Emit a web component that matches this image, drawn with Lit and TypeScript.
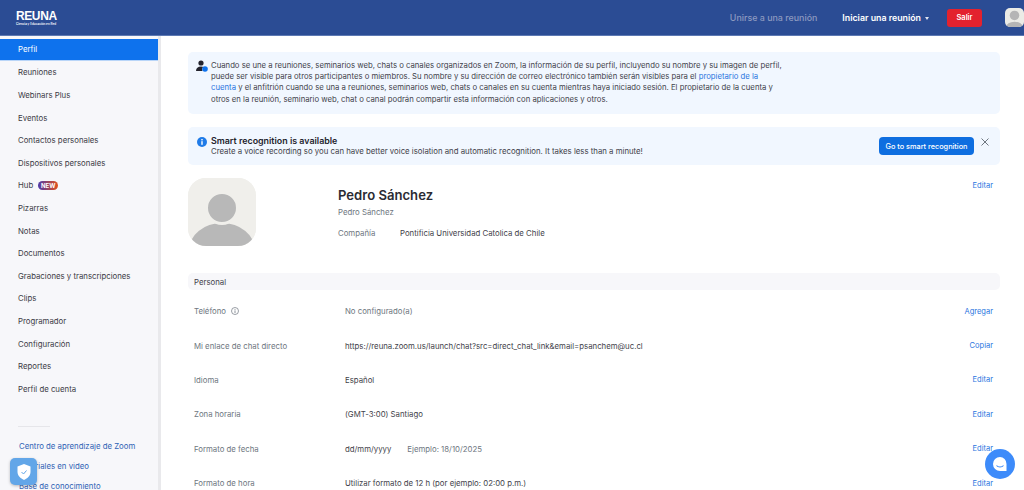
import { LitElement, html, css } from "lit";
import { customElement } from "lit/decorators.js";

const NAV = ["Reuniones","Webinars Plus","Eventos","Contactos personales","Dispositivos personales","Hub","Pizarras","Notas","Documentos","Grabaciones y transcripciones","Clips","Programador","Configuración","Reportes","Perfil de cuenta"];
const ROWS: [string, string, string][] = [
  ["Teléfono", "No configurado(a)", "Agregar"],
  ["Mi enlace de chat directo", "https://reuna.zoom.us/launch/chat?src=direct_chat_link&email=psanchem@uc.cl", "Copiar"],
  ["Idioma", "Español", "Editar"],
  ["Zona horaria", "(GMT-3:00) Santiago", "Editar"],
  ["Formato de fecha", "dd/mm/yyyy", "Editar"],
  ["Formato de hora", "Utilizar formato de 12 h (por ejemplo: 02:00 p.m.)", "Editar"],
];

@customElement("app-root")
export class AppRoot extends LitElement {
  static styles = css`
    :host { display: block; width: 1024px; height: 490px; overflow: hidden; position: relative; background: #fff; font-family: Inter, "Liberation Sans", sans-serif; font-size: 7.8px; color: #3f3f4a; }
    * { box-sizing: border-box; }
    a { color: #2a75e0; text-decoration: none; }
    .top { height: 36px; background: #2b4c94; border-bottom: 1px solid #5d79b3; display: flex; align-items: center; padding-left: 16px; }
    .logo { display: flex; flex-direction: column; color: #fff; width: 41px; margin-top: 1px; }
    .logo b { font: 700 12px/11px "Liberation Sans", sans-serif; letter-spacing: -0.4px; }
    .logo span { font-size: 3px; line-height: 4px; white-space: nowrap; font-weight: 600; }
    .spacer { flex: 1; }
    .join { color: #8d9ac0; font-size: 8.9px; font-weight: 500; margin-right: 25px; }
    .start { color: #fff; font-size: 8.8px; font-weight: 600; display: flex; align-items: center; gap: 4px; margin-right: 18px; }
    .caret { width: 0; height: 0; border: 2.5px solid transparent; border-top: 3px solid #dfe5f2; margin-top: 3px; }
    .exit { width: 35px; height: 18px; background: #e3222e; border-radius: 3px; color: #fff; font-size: 7.5px; font-weight: 600; display: flex; align-items: center; justify-content: center; margin-right: 23px; }
    .avatar-s { width: 19px; height: 19px; border-radius: 5px; background: #ebebe6; overflow: hidden; display: block; flex: none; }
    .wrap { display: flex; height: 454px; }
    .side { width: 161px; flex: none; height: 100%; background: #f7f7fa; border-right: 3px solid #e9e9ec; padding-top: 2.5px; display: flex; flex-direction: column; overflow: hidden; }
    .item { height: 22.6px; flex: none; display: flex; align-items: center; padding-left: 18px; gap: 5px; color: #3c3c46; }
    .item.on { background: #0e72ed; color: #fff; border-bottom: 1px solid #b9d5f8; }
    .badge { width: 20px; height: 9px; border-radius: 5px; background: linear-gradient(90deg,#4d3bab,#e2501b); color: #fff; font-size: 6px; font-weight: 700; display: flex; align-items: center; justify-content: center; }
    .rule { width: 32px; height: 1px; background: #e6e6ea; margin: 26px 0 0 18px; flex: none; }
    .help { height: 20px; flex: none; display: flex; align-items: center; padding-left: 19px; color: #2f62b5; white-space: nowrap; }
    .help.first { margin-top: 8.5px; }
    .main { flex: 1; padding: 16px 24px 0 27px; min-width: 0; display: flex; flex-direction: column; }
    .main > * { flex: none; }
    .box { background: #f1f7ff; border-radius: 5px; }
    .notice { height: 62px; display: flex; gap: 3px; padding: 7.5px 8px 0 8px; line-height: 11.4px; font-size: 7.74px; }
    .notice svg { flex: none; }
    .notice p { margin: 0; width: 572px; }
    .banner { height: 38px; margin-top: 13px; display: flex; align-items: center; padding: 0 8px; gap: 3px; }
    .banner-text { flex: 1; display: flex; flex-direction: column; }
    .banner-text b { font-size: 8.9px; font-weight: 600; color: #23232d; line-height: 11px; }
    .banner-text span { line-height: 11px; }
    .go { height: 18px; width: 95px; background: #0e6ee0; border-radius: 4px; color: #fff; font-size: 7.3px; font-weight: 500; display: flex; align-items: center; justify-content: center; margin-right: 4px; white-space: nowrap; flex: none; }
    .close { width: 8px; height: 8px; display: block; margin: -9px 3px 0 0; flex: none; }
    .profile { height: 68px; margin-top: 13px; display: flex; }
    .photo { width: 68px; height: 68px; border-radius: 18px; flex: none; background: #f0efeb; overflow: hidden; display: block; }
    .info { margin-left: 82px; flex: 1; padding-top: 9px; }
    .info h1 { margin: 0; font-size: 13.1px; line-height: 16px; font-weight: 600; color: #2b2b33; }
    .sub { color: #6e7680; line-height: 11px; margin-top: 4px; }
    .co { display: flex; margin-top: 10px; line-height: 11px; }
    .co span { width: 62px; color: #6e7680; }
    .edit { color: #2a75e0; padding: 3px 7px 0 0; font-size: 7.5px; }
    .section { height: 17px; margin-top: 27px; background: #f7f7fa; border-radius: 5px; padding-left: 6px; display: flex; align-items: center; }
    .row { height: 34.4px; display: grid; grid-template-columns: 151px 1fr auto; align-items: center; padding: 0 7px 0 6px; }
    .row a { font-size: 7.5px; }
    .rows { margin-top: 4px; }
    .label { color: #6e7680; display: flex; align-items: center; gap: 5px; }
    .ex { color: #6e7680; margin-left: 16px; }
    .muted { color: #6e7680; }
    .shield { position: absolute; left: 10px; top: 458px; width: 27px; height: 27px; border-radius: 5px; background: #62a6e8; box-shadow: 0 1px 3px rgba(0,0,0,.25); display: flex; align-items: center; justify-content: center; }
    .chat { position: absolute; left: 985px; top: 449px; width: 30px; height: 30px; border-radius: 50%; background: #3d8bfa; display: flex; align-items: center; justify-content: center; }
  `;

  render() {
    return html`
      <div class="top">
        <div class="logo"><b>REUNA</b><span>Ciencia y Educación en Red</span></div>
        <div class="spacer"></div>
        <span class="join">Unirse a una reunión</span>
        <span class="start">Iniciar una reunión <i class="caret"></i></span>
        <span class="exit">Salir</span>
        <svg class="avatar-s" viewBox="0 0 18 18"><circle cx="9" cy="7" r="4.5" fill="#b5b5b5"/><ellipse cx="9" cy="18" rx="8" ry="5" fill="#b5b5b5"/></svg>
      </div>
      <div class="wrap">
        <nav class="side">
          <div class="item on">Perfil</div>
          ${NAV.map(n => html`<div class="item">${n}${n === "Hub" ? html`<span class="badge">NEW</span>` : ""}</div>`)}
          <div class="rule"></div>
          <div class="help first">Centro de aprendizaje de Zoom</div>
          <div class="help">Tutoriales en video</div>
          <div class="help">Base de conocimiento</div>
        </nav>
        <main class="main">
          <div class="box notice">
            <svg width="12" height="14" viewBox="0 0 12 14"><circle cx="5" cy="3" r="2.6" fill="#23232d"/><path d="M0 11c0-3 2-4.500 5-4.500 1 0 2 .2 2.600.5A3 3 0 0 0 6.500 11z" fill="#23232d"/><circle cx="9" cy="9" r="2.800" fill="#0e72ed"/></svg>
            <p>Cuando se une a reuniones, seminarios web, chats o canales organizados en Zoom, la información de su perfil, incluyendo su nombre y su imagen de perfil, puede ser visible para otros participantes o miembros. Su nombre y su dirección de correo electrónico también serán visibles para el <a>propietario de la cuenta</a> y el anfitrión cuando se una a reuniones, seminarios web, chats o canales en su cuenta mientras haya iniciado sesión. El propietario de la cuenta y otros en la reunión, seminario web, chat o canal podrán compartir esta información con aplicaciones y otros.</p>
          </div>
          <div class="box banner">
            <svg width="12" height="12" viewBox="0 0 12 12" style="margin-top:-9px"><circle cx="6" cy="6" r="5" fill="#1f7be8"/><rect x="5.300" y="5.200" width="1.400" height="3.600" fill="#fff"/><rect x="5.300" y="3" width="1.400" height="1.400" fill="#fff"/></svg>
            <div class="banner-text"><b>Smart recognition is available</b><span>Create a voice recording so you can have better voice isolation and automatic recognition. It takes less than a minute!</span></div>
            <span class="go">Go to smart recognition</span>
            <svg class="close" viewBox="0 0 8 8"><path d="M.5.5l7 7M7.500.5l-7 7" stroke="#6e7680" stroke-width="1" fill="none"/></svg>
          </div>
          <div class="profile">
            <svg class="photo" viewBox="0 0 68 68"><rect width="68" height="68" fill="#f0efeb"/><ellipse cx="34" cy="72" rx="33" ry="27" fill="#b8b8b8"/><circle cx="34" cy="30" r="15.500" fill="#b8b8b8" stroke="#f0efeb" stroke-width="3"/></svg>
            <div class="info">
              <h1>Pedro Sánchez</h1>
              <div class="sub">Pedro Sánchez</div>
              <div class="co"><span>Compañía</span>Pontificia Universidad Catolica de Chile</div>
            </div>
            <a class="edit">Editar</a>
          </div>
          <div class="section">Personal</div>
          <div class="rows">
            ${ROWS.map(([l, v, a], i) => html`
              <div class="row">
                <span class="label">${l}${i === 0 ? html`<svg width="8" height="8" viewBox="0 0 8 8"><circle cx="4" cy="4" r="3.500" fill="none" stroke="#6e7680" stroke-width=".7"/><path d="M4 3.400v2.600M4 2v.8" stroke="#6e7680" stroke-width=".8"/></svg>` : ""}</span>
                <span class=${i === 0 ? "muted" : ""}>${v}${i === 4 ? html`<span class="ex">Ejemplo: 18/10/2025</span>` : ""}</span>
                <a>${a}</a>
              </div>`)}
          </div>
        </main>
      </div>
      <div class="shield"><svg width="14" height="16" viewBox="0 0 14 16"><path d="M7 0l6.500 2.500V8c0 3.500-3 6.500-6.500 8C3.500 14.500.5 11.500.5 8V2.500z" fill="#fff"/><path d="M4.500 8l2 2 3-3.500" stroke="#62a6e8" stroke-width="1" fill="none"/></svg></div>
      <div class="chat"><svg width="16" height="16" viewBox="0 0 16 16"><path d="M8 1a7 7 0 1 0 0 14h6.500V8A6.500 7 0 0 0 8 1z" fill="#fff"/><path d="M4.500 9.500c1.500 2 5.500 2 7 0" stroke="#3d8bfa" stroke-width="1.100" fill="none"/></svg></div>
    `;
  }
}
